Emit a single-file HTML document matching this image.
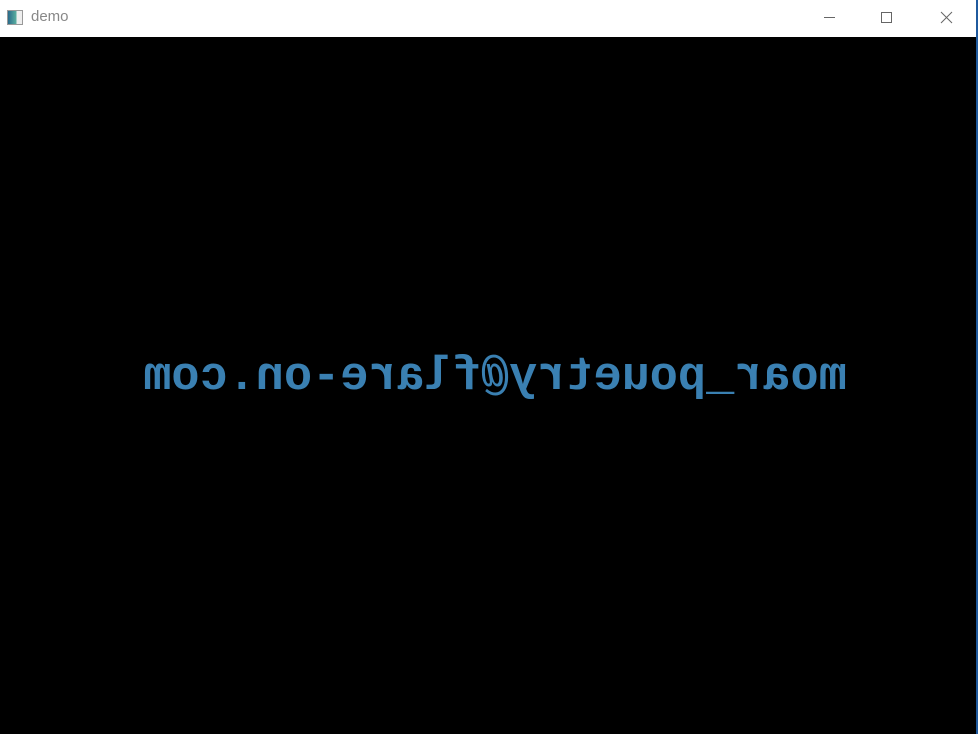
<!DOCTYPE html>
<html><head><style>
html,body{margin:0;padding:0;width:978px;height:734px;overflow:hidden;background:#000;}
.tb{position:absolute;left:0;top:0;width:978px;height:37px;background:#fff;}
.title{position:absolute;left:31px;top:8px;font:15px "Liberation Sans",sans-serif;color:#888;}
.ico{position:absolute;left:7px;top:10px;width:14px;height:13px;border:1px solid #999;background:linear-gradient(90deg,#2a6a8a,#5ab0a0 60%,#eee 60%);}
.ctl{position:absolute;top:0;height:37px;width:46px;}
.edge{position:absolute;right:0;top:0;width:2px;height:734px;background:#1f5a9e;}
.txt{position:absolute;left:143px;top:343px;width:704px;text-align:center;font:bold 46.9px "Liberation Mono",monospace;color:#3a80b2;transform:scaleX(-1);line-height:70px;white-space:nowrap;}
</style></head><body>
<div class="tb">
<div class="ico"></div>
<div class="title">demo</div>
<svg class="ctl" style="left:806px" viewBox="0 0 46 37"><line x1="18" y1="17.5" x2="29" y2="17.5" stroke="#666"/></svg>
<svg class="ctl" style="left:864px" viewBox="0 0 46 37"><rect x="17.5" y="12.5" width="10" height="10" fill="none" stroke="#666"/></svg>
<svg class="ctl" style="left:923px" viewBox="0 0 46 37"><path d="M18 12L29 23M29 12L18 23" stroke="#666"/></svg>
</div>
<div class="edge"></div>
<div class="txt">moar_pouetry@flare-on.com</div>
</body></html>
